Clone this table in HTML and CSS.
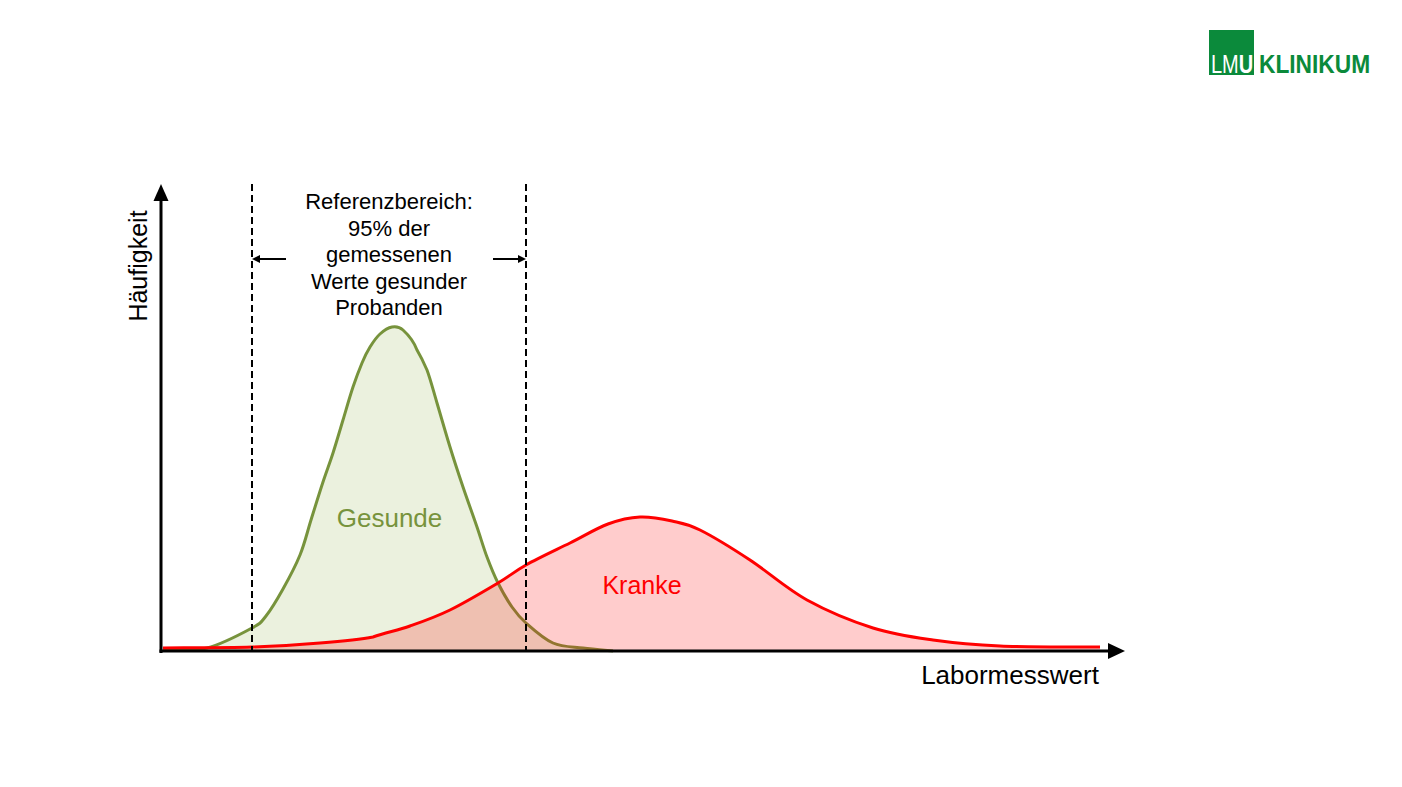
FILE: index.html
```html
<!DOCTYPE html>
<html lang="de">
<head>
<meta charset="utf-8">
<title>Referenzbereich</title>
<link rel="stylesheet" href="styles.css">
</head>
<body>
<div class="slide">
  <header class="top">
    <svg class="logo" width="166" height="50" viewBox="0 0 166 50">
      <rect x="0" y="2" width="45" height="45" class="logo-box"/>
      <text x="2.5" y="45.5" class="logo-lmu" transform="scale(0.8 1)">LM<tspan class="logo-u">U</tspan></text>
      <text x="54.9" y="45.5" class="logo-word" transform="scale(0.91 1)">KLINIKUM</text>
    </svg>
  </header>
  <main class="chart">
    <svg class="plot" width="1402" height="707" viewBox="0 80 1402 707">
      <!-- Gesunde -->
      <path class="green-fill" d="M163,650 C170.3,649.7 192.2,651.7 207,648 C221.8,644.3 242.2,633.3 252,628 C261.8,622.7 260.8,622.5 266,616 C271.2,609.5 277.3,599.2 283,589 C288.7,578.8 295.3,566.5 300,555 C304.7,543.5 307.2,532.2 311,520 C314.8,507.8 319.3,493.2 323,482 C326.7,470.8 329.7,463.3 333,453 C336.3,442.7 339.7,431 343,420 C346.3,409 349.8,396.5 353,387 C356.2,377.5 359.2,369.7 362,363 C364.8,356.3 367,351.8 370,347 C373,342.2 376.3,337.3 380,334 C383.7,330.7 388.2,327.7 392,327 C395.8,326.3 398.8,326.2 403,330 C407.2,333.8 413.7,341.2 417,350 C421,356.7 423.2,361.2 427,370 C430.3,378.8 433.2,390.2 437,403 C440.8,415.8 445.7,433 450,447 C454.3,461 458.5,473.7 463,487 C467.5,500.3 473,515.3 477,527 C481,538.7 483.5,547.7 487,557 C490.5,566.3 493.8,574.7 498,583 C502.2,591.3 507.3,600.3 512,607 C516.7,613.7 519.2,617 526,623 C532.8,629 543.5,638.8 553,643 C562.5,647.2 573,646.7 583,648 C593,649.3 608,650.5 613,651 L163,651 Z"/>
      <path class="green-line" d="M163,650 C170.3,649.7 192.2,651.7 207,648 C221.8,644.3 242.2,633.3 252,628 C261.8,622.7 260.8,622.5 266,616 C271.2,609.5 277.3,599.2 283,589 C288.7,578.8 295.3,566.5 300,555 C304.7,543.5 307.2,532.2 311,520 C314.8,507.8 319.3,493.2 323,482 C326.7,470.8 329.7,463.3 333,453 C336.3,442.7 339.7,431 343,420 C346.3,409 349.8,396.5 353,387 C356.2,377.5 359.2,369.7 362,363 C364.8,356.3 367,351.8 370,347 C373,342.2 376.3,337.3 380,334 C383.7,330.7 388.2,327.7 392,327 C395.8,326.3 398.8,326.2 403,330 C407.2,333.8 413.7,341.2 417,350 C421,356.7 423.2,361.2 427,370 C430.3,378.8 433.2,390.2 437,403 C440.8,415.8 445.7,433 450,447 C454.3,461 458.5,473.7 463,487 C467.5,500.3 473,515.3 477,527 C481,538.7 483.5,547.7 487,557 C490.5,566.3 493.8,574.7 498,583 C502.2,591.3 507.3,600.3 512,607 C516.7,613.7 519.2,617 526,623 C532.8,629 543.5,638.8 553,643 C562.5,647.2 573,646.7 583,648 C593,649.3 608,650.5 613,651"/>
      <!-- Kranke -->
      <path class="red-fill" d="M163,648 C177.8,647.8 225.8,647.8 252,647 C278.2,646.2 299.8,644.7 320,643 C340.2,641.3 358,639.8 373,637 C385.8,632.5 397.2,630.5 410,626 C422.8,621.5 435.3,617.2 450,610 C464.7,602.8 485.3,590.5 498,583 C510.7,575.5 514,571.7 526,565 C538,558.3 556.3,549.8 570,543 C583.7,536.2 596.3,528.3 608,524 C619.7,519.7 629.3,517.5 640,517 C650.7,516.5 662,518.8 672,521 C682,523.2 687,523.5 700,530 C713,536.5 732.2,548.3 750,560 C767.8,571.7 786.5,588.7 807,600 C827.5,611.3 852,621.3 873,628 C894,634.7 911.8,637 933,640 C954.2,643 972.2,644.8 1000,646 C1027.8,647.2 1083.3,646.8 1100,647 L1100,651 L163,651 Z"/>
      <path class="red-line" d="M163,648 C177.8,647.8 225.8,647.8 252,647 C278.2,646.2 299.8,644.7 320,643 C340.2,641.3 358,639.8 373,637 C385.8,632.5 397.2,630.5 410,626 C422.8,621.5 435.3,617.2 450,610 C464.7,602.8 485.3,590.5 498,583 C510.7,575.5 514,571.7 526,565 C538,558.3 556.3,549.8 570,543 C583.7,536.2 596.3,528.3 608,524 C619.7,519.7 629.3,517.5 640,517 C650.7,516.5 662,518.8 672,521 C682,523.2 687,523.5 700,530 C713,536.5 732.2,548.3 750,560 C767.8,571.7 786.5,588.7 807,600 C827.5,611.3 852,621.3 873,628 C894,634.7 911.8,637 933,640 C954.2,643 972.2,644.8 1000,646 C1027.8,647.2 1083.3,646.8 1100,647"/>
      <!-- reference range -->
      <line class="dash" x1="252" y1="184" x2="252" y2="652"/>
      <line class="dash" x1="526" y1="184" x2="526" y2="652"/>
      <line class="thin" x1="286" y1="259" x2="258" y2="259"/>
      <polygon class="head" points="252,259 260,255 260,263"/>
      <line class="thin" x1="493" y1="259" x2="520" y2="259"/>
      <polygon class="head" points="526,259 518,255 518,263"/>
      <!-- axes -->
      <line class="axis" x1="161" y1="653" x2="161" y2="198"/>
      <polygon class="head" points="161,184 153.5,201 168.5,201"/>
      <line class="axis" x1="159.5" y1="651" x2="1110" y2="651"/>
      <polygon class="head" points="1125,651 1108,643 1108,659"/>
      <!-- labels -->
      <text class="label y-label" x="147" y="266" transform="rotate(-90 147 266)">Häufigkeit</text>
      <text class="label range-label" x="389" y="209">Referenzbereich:</text>
      <text class="label range-label" x="389" y="235.5">95% der</text>
      <text class="label range-label" x="389" y="262">gemessenen</text>
      <text class="label range-label" x="389" y="288.5">Werte gesunder</text>
      <text class="label range-label" x="389" y="315">Probanden</text>
      <text class="label healthy" x="389.5" y="527">Gesunde</text>
      <text class="label sick" x="642" y="594">Kranke</text>
      <text class="label x-label" x="1010" y="684">Labormesswert</text>
    </svg>
  </main>
</div>
</body>
</html>
```

FILE: styles.css
```css
html, body {
  margin: 0;
  padding: 0;
  background: #ffffff;
}

.slide {
  width: 1402px;
  height: 787px;
  overflow: hidden;
  display: flex;
  flex-direction: column;
  font-family: "Liberation Sans", Arial, sans-serif;
}

.top {
  height: 80px;
  box-sizing: border-box;
  display: flex;
  justify-content: flex-end;
  align-items: flex-start;
  padding: 28px 27px 0 0;
}

.logo {
  display: block;
}

.logo-box {
  fill: #0b8a3b;
}

.logo-lmu {
  font-family: "Liberation Sans", Arial, sans-serif;
  font-size: 25px;
  fill: #ffffff;
}

.logo-u {
  font-weight: bold;
}

.logo-word {
  font-family: "Liberation Sans", Arial, sans-serif;
  font-size: 25px;
  font-weight: bold;
  fill: #0b8a3b;
}

.chart {
  flex: 1;
}

.plot {
  display: block;
}

.green-fill {
  fill: #ebf1de;
  stroke: none;
}

.green-line {
  fill: none;
  stroke: #77933c;
  stroke-width: 3;
  stroke-linejoin: round;
}

.red-fill {
  fill: rgba(255, 0, 0, 0.2);
  stroke: none;
}

.red-line {
  fill: none;
  stroke: #ff0000;
  stroke-width: 3;
  stroke-linejoin: round;
}

.dash {
  stroke: #000000;
  stroke-width: 2;
  stroke-dasharray: 7 4;
}

.thin {
  stroke: #000000;
  stroke-width: 2;
}

.axis {
  stroke: #000000;
  stroke-width: 3;
}

.head {
  fill: #000000;
}

.label {
  font-family: "Liberation Sans", Arial, sans-serif;
  text-anchor: middle;
  fill: #000000;
}

.y-label {
  font-size: 25px;
}

.x-label {
  font-size: 26px;
}

.range-label {
  font-size: 22px;
}

.healthy {
  font-size: 26px;
  fill: #77933c;
}

.sick {
  font-size: 25px;
  fill: #ff0000;
}
```
